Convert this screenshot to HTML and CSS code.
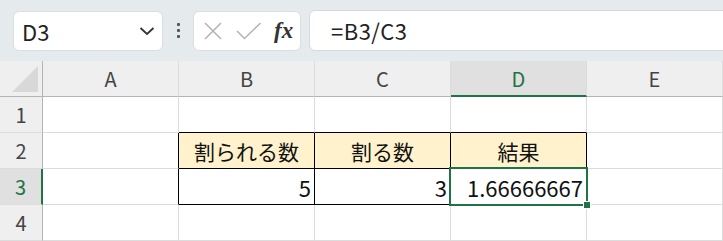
FILE: index.html
```html
<!DOCTYPE html>
<html lang="ja">

<head>
    <meta charset="utf-8">
    <meta name="viewport" content="width=device-width, initial-scale=1.0">
    <title>Excel</title>
    <link rel="stylesheet" href="styles.css">
</head>

<body>
    <div class="toolbar">
        <div class="namebox">
            <span class="adresse">D3</span>
            <svg class="pil" width="16" height="10" viewBox="0 0 16 10">
                <path d="M1.5 2 L8 8 L14.5 2" fill="none" stroke="#333" stroke-width="1.8" />
            </svg>
        </div>
        <div class="prikker"><i></i><i></i><i></i></div>
        <div class="fxbox">
            <svg width="20" height="18" viewBox="0 0 20 18">
                <path d="M2 1 L18 17 M18 1 L2 17" fill="none" stroke="#b4b4b4" stroke-width="1.6" />
            </svg>
            <svg width="26" height="18" viewBox="0 0 26 18">
                <path d="M1 9 L8.5 16.5 L24.5 1" fill="none" stroke="#b4b4b4" stroke-width="1.6" />
            </svg>
            <span class="fx">fx</span>
        </div>
        <div class="formel">=B3/C3</div>
    </div>

    <div class="ark">
        <div class="hjorne"><span class="trekant"></span></div>
        <div class="kolhoved">A</div>
        <div class="kolhoved">B</div>
        <div class="kolhoved">C</div>
        <div class="kolhoved valgt">D</div>
        <div class="kolhoved">E</div>

        <div class="raekhoved">1</div>
        <div class="celle"></div>
        <div class="celle bund"></div>
        <div class="celle bund"></div>
        <div class="celle bund"></div>
        <div class="celle"></div>

        <div class="raekhoved">2</div>
        <div class="celle hoejre"></div>
        <div class="celle tabel gul">割られる数</div>
        <div class="celle tabel gul">割る数</div>
        <div class="celle tabel gul">結果</div>
        <div class="celle"></div>

        <div class="raekhoved valgt">3</div>
        <div class="celle hoejre"></div>
        <div class="celle tabel tal">5</div>
        <div class="celle tabel tal">3</div>
        <div class="celle tabel tal aktiv">1.66666667</div>
        <div class="celle"></div>

        <div class="raekhoved">4</div>
        <div class="celle"></div>
        <div class="celle"></div>
        <div class="celle"></div>
        <div class="celle"></div>
        <div class="celle"></div>
    </div>
</body>

</html>
```

FILE: styles.css
```css
html,
body {
    margin: 0px;
    background-color: #ffffff;
    font-family: "Noto Sans CJK JP", "Noto Sans", sans-serif;
    overflow: hidden;
}

.toolbar {
    display: flex;
    align-items: center;
    height: 61px;
    padding-left: 13px;
    box-sizing: border-box;
    background-color: #e5eaed;
}

.namebox {
    display: flex;
    align-items: center;
    justify-content: space-between;
    width: 150px;
    height: 40px;
    padding: 0px 7px 0px 8px;
    box-sizing: border-box;
    background-color: #ffffff;
    border: 1px solid #d9dee2;
    border-radius: 6px;
    font-size: 22px;
    color: #222222;
}

.prikker {
    display: flex;
    flex-direction: column;
    gap: 3px;
    margin: 0px 13px 0px 14px;
}

.prikker i {
    width: 3px;
    height: 3px;
    background-color: #555555;
    border-radius: 1px;
}

.fxbox {
    display: flex;
    align-items: center;
    gap: 13px;
    width: 108px;
    height: 40px;
    padding-left: 9px;
    box-sizing: border-box;
    background-color: #ffffff;
    border: 1px solid #d9dee2;
    border-radius: 6px;
}

.fx {
    font-family: "Liberation Serif", serif;
    font-style: italic;
    font-weight: bold;
    font-size: 23px;
    color: #333333;
    margin-left: -1px;
}

.formel {
    flex: 1;
    height: 41px;
    margin: -1px -10px 0px 8px;
    padding-left: 21px;
    box-sizing: border-box;
    background-color: #ffffff;
    border: 1px solid #d4d9dd;
    border-radius: 6px;
    font-size: 22px;
    letter-spacing: 0.5px;
    line-height: 38px;
    color: #222222;
}

.ark {
    display: grid;
    grid-template-columns: 43px repeat(4, 136px) 1fr;
    grid-template-rows: repeat(5, 36px);
}

.ark > div {
    box-sizing: border-box;
    border-right: 1px solid #dcdcdc;
    border-bottom: 1px solid #dcdcdc;
}

.hjorne {
    position: relative;
    background-color: #efefef;
}

.trekant {
    position: absolute;
    left: 12px;
    top: 5px;
    width: 0px;
    height: 0px;
    border-left: 26px solid transparent;
    border-bottom: 26px solid #d8d8d8;
}

.ark > .kolhoved {
    display: flex;
    align-items: center;
    justify-content: center;
    background-color: #efefef;
    border-bottom-color: #b4b4b4;
    font-size: 20px;
    color: #444444;
}

.ark > .raekhoved {
    display: flex;
    align-items: center;
    justify-content: center;
    background-color: #efefef;
    border-right-color: #b4b4b4;
    font-size: 20px;
    color: #444444;
}

.ark > .hjorne {
    border-bottom-color: #b4b4b4;
    border-right-color: #b4b4b4;
}

.ark > .kolhoved.valgt {
    background-color: #e0e0e0;
    border-bottom: 2px solid #217346;
    color: #217346;
}

.ark > .raekhoved.valgt {
    background-color: #e0e0e0;
    border-right: 2px solid #217346;
    color: #217346;
}

.celle {
    display: flex;
    align-items: center;
    font-size: 21px;
    color: #111111;
}

.ark > .bund {
    border-bottom-color: #000000;
}

.ark > .hoejre {
    border-right-color: #000000;
}

.ark > .tabel {
    border-right-color: #000000;
    border-bottom-color: #000000;
}

.gul {
    justify-content: center;
    background-color: #fff2cc;
    font-size: 21px;
}

.tal {
    justify-content: flex-end;
    padding-right: 3px;
    font-size: 22px;
}

.aktiv {
    position: relative;
}

.aktiv::after {
    content: "";
    position: absolute;
    left: -2px;
    top: -2px;
    right: -2px;
    bottom: -2px;
    border: 2px solid #217346;
}

.aktiv::before {
    content: "";
    position: absolute;
    right: -5px;
    bottom: -5px;
    width: 6px;
    height: 6px;
    background-color: #217346;
    border: 1px solid #ffffff;
    z-index: 1;
}
```
